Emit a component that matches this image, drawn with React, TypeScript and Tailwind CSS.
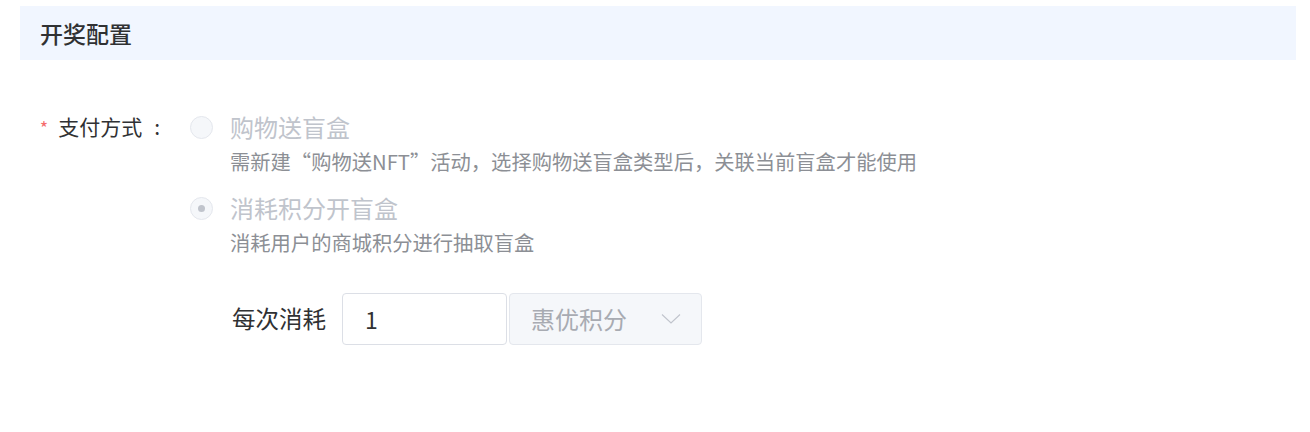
import React from "react";

const font = { fontFamily: '"Noto Sans CJK SC", "Noto Sans", sans-serif' };

function Radio({ checked }: { checked?: boolean }) {
  return (
    <span className="flex h-[23px] w-[23px] shrink-0 items-center justify-center rounded-full border border-[#e4e7ed] bg-[#f5f7fa]">
      {checked && <span className="h-[7px] w-[7px] rounded-full bg-[#c0c4cc]" />}
    </span>
  );
}

export default function App() {
  return (
    <div className="w-[1310px] h-[432px] bg-white pl-[20px] pr-[14px] pt-[6px]" style={font}>
      <div className="flex h-[54px] items-center bg-[#f1f6ff] pl-[20px]">
        <span className="text-[23px] font-medium leading-none text-[#303133]">开奖配置</span>
      </div>

      <div className="mt-[50px] flex">
        <div className="flex h-[34px] w-[170px] shrink-0 items-center justify-end pr-[30px] text-[21px] text-[#303133]">
          <span className="mr-[10px] text-[18px] text-[#f56c6c]">*</span>
          <span>支付方式</span>
          <span className="ml-[12px]">:</span>
        </div>
        <div className="flex flex-col">
          <div className="flex flex-col">
            <div className="flex h-[34px] items-center gap-[17px]">
              <Radio />
              <span className="text-[24px] text-[#c0c4cc]">购物送盲盒</span>
            </div>
            <div className="pl-[40px] text-[20.3px] leading-[34px] text-[#8c8f95]">
              需新建“购物送NFT”活动，选择购物送盲盒类型后，关联当前盲盒才能使用
            </div>
          </div>
          <div className="mt-[13px] flex flex-col">
            <div className="flex h-[34px] items-center gap-[17px]">
              <Radio checked />
              <span className="text-[24px] text-[#c0c4cc]">消耗积分开盲盒</span>
            </div>
            <div className="pl-[40px] text-[20.3px] leading-[34px] text-[#8c8f95]">
              消耗用户的商城积分进行抽取盲盒
            </div>
          </div>
          <div className="mt-[34px] flex items-center pl-[42px]">
            <span className="mr-[16px] text-[23.5px] text-[#303133]">每次消耗</span>
            <div className="flex h-[52px] w-[165px] items-center rounded-[4px] border border-[#dcdfe6] bg-white px-[22px] text-[23px] text-[#303133]">
              1
            </div>
            <div className="ml-[2px] flex h-[52px] w-[193px] items-center justify-between rounded-[4px] border border-[#e4e7ed] bg-[#f5f7fa] pl-[21px] pr-[20px]">
              <span className="text-[24px] text-[#a8abb2]">惠优积分</span>
              <svg width="20" height="12" viewBox="0 0 20 12" fill="none">
                <path d="M1 1.5 L10 10 L19 1.5" stroke="#c0c4cc" strokeWidth="1.1" />
              </svg>
            </div>
          </div>
        </div>
      </div>
    </div>
  );
}
